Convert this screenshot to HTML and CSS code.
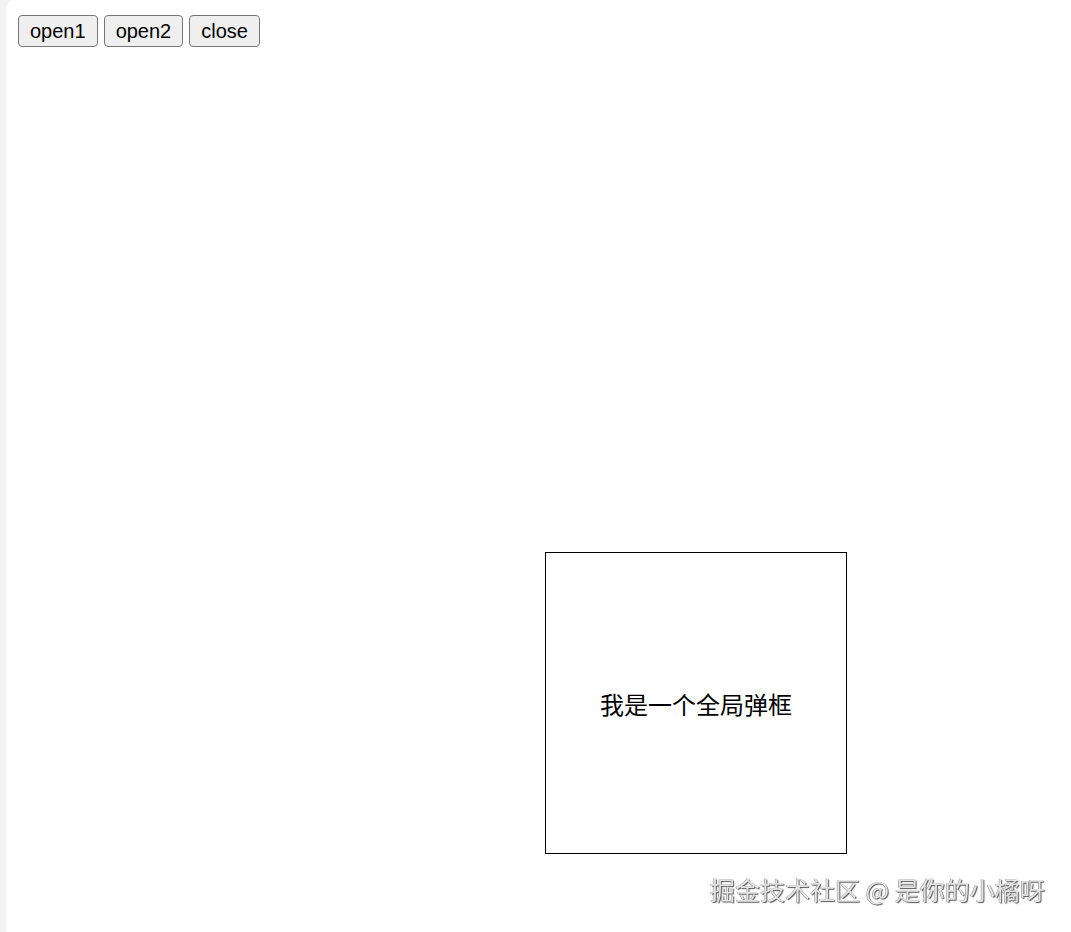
FILE: index.html
```html
<!DOCTYPE html>
<html lang="zh-CN">
<head>
<meta charset="utf-8">
<title>全局弹框</title>
<link rel="stylesheet" href="styles.css">
</head>
<body>
<div class="page">
  <div class="toolbar">
    <button class="btn">open1</button>
    <button class="btn">open2</button>
    <button class="btn">close</button>
  </div>
</div>
<div class="dialog">我是一个全局弹框</div>
<div class="watermark">掘金技术社区 @ 是你的小橘呀</div>
</body>
</html>
```

FILE: styles.css
```css
html, body {
  margin: 0;
  padding: 0;
  height: 100%;
}
body {
  background: #f3f3f3;
  font-family: "Liberation Sans", Arial, "Noto Sans CJK SC", sans-serif;
  overflow: hidden;
}
.page {
  margin: 0 0 0 6px;
  height: 932px;
  box-sizing: border-box;
  background: #ffffff;
  border-top-left-radius: 9px;
  padding: 15px 12px 12px;
}
.toolbar {
  display: flex;
  gap: 6px;
}
.btn {
  font-family: "Liberation Sans", Arial, sans-serif;
  font-size: 20px;
  line-height: 23px;
  height: 32px;
  padding: 1px 11px;
  margin: 0;
  background: #efefef;
  color: #000;
  border: 1.5px solid #767676;
  border-radius: 4px;
  box-sizing: border-box;
}
.dialog {
  position: fixed;
  left: 545px;
  top: 552px;
  width: 302px;
  height: 302px;
  box-sizing: border-box;
  border: 1px solid #000;
  background: #fff;
  display: flex;
  align-items: center;
  justify-content: center;
  font-family: "Noto Sans CJK SC", "Liberation Sans", sans-serif;
  font-size: 24px;
  color: #000;
}
.watermark {
  position: fixed;
  left: 710px;
  top: 874px;
  font-family: "Noto Sans CJK SC", "Liberation Sans", sans-serif;
  font-size: 25px;
  line-height: 30px;
  color: #e4e4e4;
  text-shadow: 1px 1px 1px #555, -0.5px -0.5px 0 #888;
  white-space: nowrap;
}
```
